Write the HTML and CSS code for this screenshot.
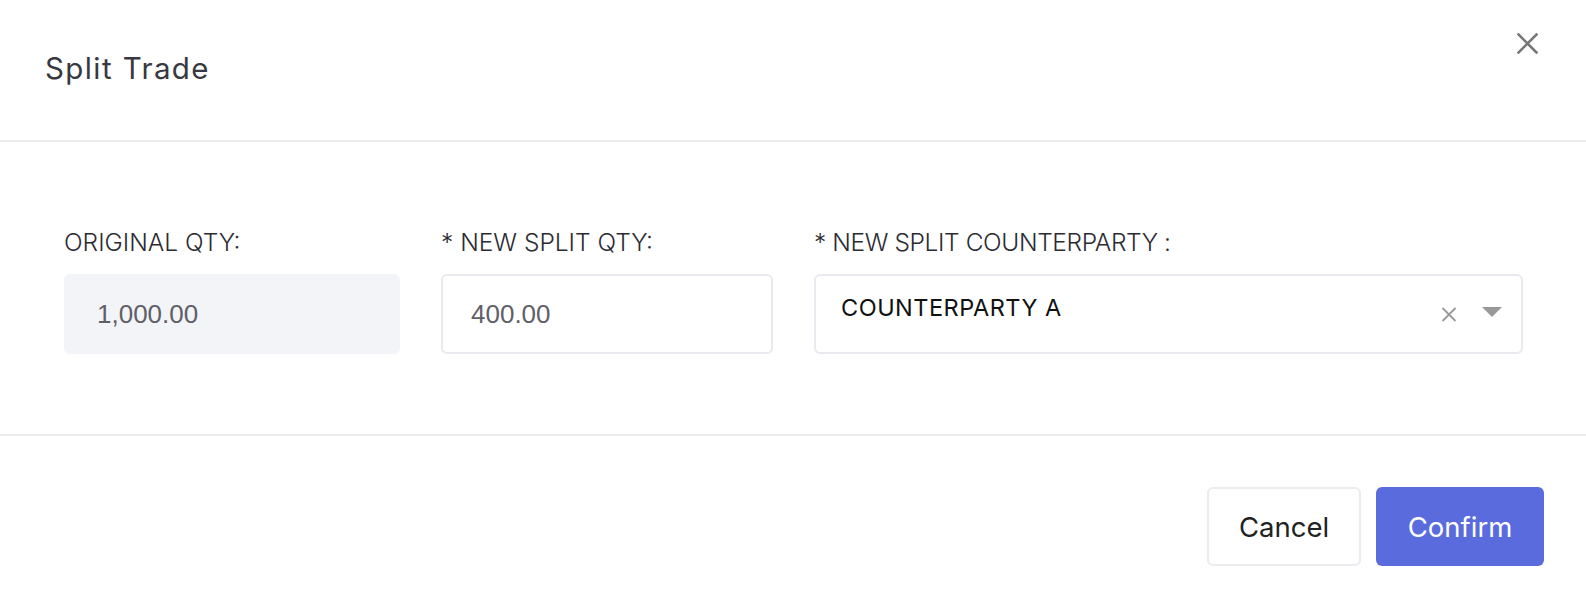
FILE: index.html
```html
<!doctype html>
<html lang="en">
<head>
    <meta charset="UTF-8">
    <title>Split Trade</title>
    <link rel="stylesheet" href="styles.css">
</head>
<body>
    <div class="modal">
        <div class="modal-header">
            <h2 class="modal-title">Split Trade</h2>
            <button class="close-btn" type="button">
                <svg width="21" height="21" viewBox="0 0 21 21"><path d="M1.5 1.5 L19.5 19.5 M19.5 1.5 L1.5 19.5" stroke="#777" stroke-width="2.6" stroke-linecap="square" fill="none"/></svg>
            </button>
        </div>

        <div class="modal-body">
            <div class="field">
                <label class="field-label">ORIGINAL QTY:</label>
                <div class="input readonly">1,000.00</div>
            </div>
            <div class="field">
                <label class="field-label">* NEW SPLIT QTY:</label>
                <div class="input">400.00</div>
            </div>
            <div class="field">
                <label class="field-label">* NEW SPLIT COUNTERPARTY :</label>
                <div class="select">
                    <span class="select-value">COUNTERPARTY A</span>
                    <span class="select-clear">
                        <svg width="16" height="15" viewBox="0 0 16 15"><path d="M1.5 1 L14.5 14 M14.5 1 L1.5 14" stroke="#999" stroke-width="1.8" fill="none"/></svg>
                    </span>
                    <span class="select-caret">
                        <svg width="20" height="10" viewBox="0 0 20 10"><path d="M0 0 L20 0 L10 10 Z" fill="#999"/></svg>
                    </span>
                </div>
            </div>
        </div>

        <div class="modal-footer">
            <button class="btn btn-cancel" type="button">Cancel</button>
            <button class="btn btn-confirm" type="button">Confirm</button>
        </div>
    </div>
</body>
</html>
```

FILE: styles.css
```css
*{padding: 0; margin: 0; box-sizing: border-box;}
body{background: #fff; font-family: Inter, "Open Sans", sans-serif; color: #2b2b33;}

.modal{width: 100%; min-height: 610px; background: #fff;}

.modal-header{height: 142px; border-bottom: 2px solid #ebebf0; display: flex; justify-content: space-between; align-items: flex-start; padding: 0 48px 0 45px;}
.modal-title{margin-top: 50px; font-size: 29.5px; line-height: 36px; font-weight: 400; letter-spacing: 1.4px; color: #383842;}
.close-btn{margin-top: 33px; width: 21px; height: 21px; border: none; background: none; display: block;}
.close-btn svg{display: block;}

.modal-body{display: grid; grid-template-columns: 336px 332px 1fr; column-gap: 41px; padding: 85px 63px 80px 64px; border-bottom: 2px solid #ebebf0;}
.field{display: flex; flex-direction: column; gap: 17px;}
.field-label{font-size: 24.5px; line-height: 30px; font-weight: 300; color: #2b2b33; white-space: nowrap;}
.field:last-child .field-label{letter-spacing: -0.4px;}

.input{height: 80px; border: 2px solid #e9e9ef; border-radius: 6px; display: flex; align-items: center; padding-left: 28px; font-family: "Liberation Sans", Arial, sans-serif; font-size: 26px; color: #5f5f68;}
.input.readonly{background: #f3f4f8; border-color: #f3f4f8; padding-left: 31px;}

.select{height: 80px; border: 2px solid #e9e9ef; border-radius: 6px; display: flex; align-items: center; padding: 0 19px 0 25px;}
.select-value{flex: 1; font-size: 23.5px; letter-spacing: 0.5px; color: #111; margin-top: -14px;}
.select-clear{width: 16px; height: 15px; margin-right: 25px;}
.select-caret{width: 20px; height: 10px; margin-top: -5px;}
.select-clear svg, .select-caret svg{display: block;}

.modal-footer{display: flex; justify-content: flex-end; gap: 15px; padding: 51px 42px 0 0;}
.btn{height: 79px; border-radius: 6px; font-family: Inter, "Open Sans", sans-serif; font-size: 27.5px; font-weight: 400;}
.btn-cancel{width: 154px; background: #fff; border: 2px solid #ebebf0; color: #222;}
.btn-confirm{width: 168px; background: #5a6bdd; border: none; color: #fff;}
```
